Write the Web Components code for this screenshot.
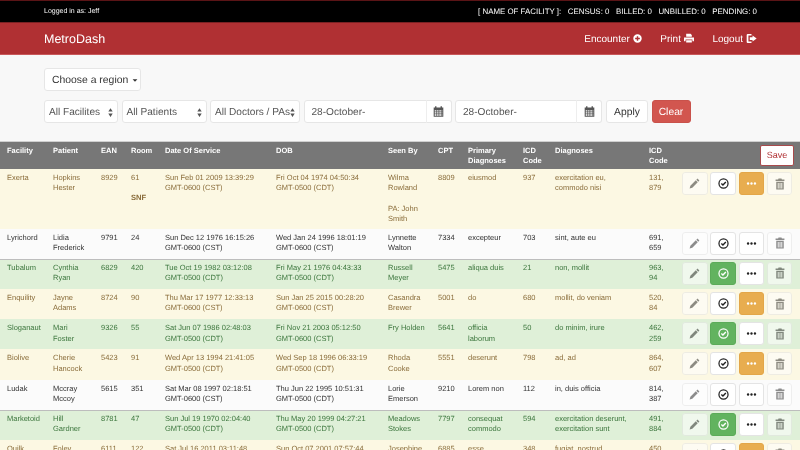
<!DOCTYPE html>
<html>
<head>
<meta charset="utf-8">
<title>MetroDash</title>
<style>
  html, body { margin: 0; height: 450px; overflow: hidden; background: #f8f8f8; }
  body { font-family: "Liberation Sans", Arial, sans-serif; color: #333; text-rendering: geometricPrecision; }
  .tag { display: block; margin-top: 9.700px; font-size: 7.600px; }
</style>
</head>
<body>

<app-header></app-header>
<filter-bar></filter-bar>

<claims-table>
  <claim-row status="warning">
    <span>Exerta</span><span>Hopkins<br>Hester</span><span>8929</span><span>61<b class="tag">SNF</b></span>
    <span>Sun Feb 01 2009 13:39:29<br>GMT-0600 (CST)</span><span>Fri Oct 04 1974 04:50:34<br>GMT-0500 (CDT)</span>
    <span>Wilma<br>Rowland<br><br>PA: John<br>Smith</span><span>8809</span><span>eiusmod</span><span>937</span>
    <span>exercitation eu,<br>commodo nisi</span><span>131,<br>879</span>
  </claim-row>
  <claim-row>
    <span>Lyrichord</span><span>Lidia<br>Frederick</span><span>9791</span><span>24</span>
    <span>Sun Dec 12 1976 16:15:26<br>GMT-0600 (CST)</span><span>Wed Jan 24 1996 18:01:19<br>GMT-0600 (CST)</span>
    <span>Lynnette<br>Walton</span><span>7334</span><span>excepteur</span><span>703</span>
    <span>sint, aute eu</span><span>691,<br>659</span>
  </claim-row>
  <claim-row status="success" ruled>
    <span>Tubalum</span><span>Cynthia<br>Ryan</span><span>6829</span><span>420</span>
    <span>Tue Oct 19 1982 03:12:08<br>GMT-0500 (CDT)</span><span>Fri May 21 1976 04:43:33<br>GMT-0500 (CDT)</span>
    <span>Russell<br>Meyer</span><span>5475</span><span>aliqua duis</span><span>21</span>
    <span>non, mollit</span><span>963,<br>94</span>
  </claim-row>
  <claim-row status="warning">
    <span>Enquility</span><span>Jayne<br>Adams</span><span>8724</span><span>90</span>
    <span>Thu Mar 17 1977 12:33:13<br>GMT-0600 (CST)</span><span>Sun Jan 25 2015 00:28:20<br>GMT-0600 (CST)</span>
    <span>Casandra<br>Brewer</span><span>5001</span><span>do</span><span>680</span>
    <span>mollit, do veniam</span><span>520,<br>84</span>
  </claim-row>
  <claim-row status="success">
    <span>Sloganaut</span><span>Mari<br>Foster</span><span>9326</span><span>55</span>
    <span>Sat Jun 07 1986 02:48:03<br>GMT-0500 (CDT)</span><span>Fri Nov 21 2003 05:12:50<br>GMT-0600 (CST)</span>
    <span>Fry Holden</span><span>5641</span><span>officia<br>laborum</span><span>50</span>
    <span>do minim, irure</span><span>462,<br>259</span>
  </claim-row>
  <claim-row status="warning">
    <span>Biolive</span><span>Cherie<br>Hancock</span><span>5423</span><span>91</span>
    <span>Wed Apr 13 1994 21:41:05<br>GMT-0500 (CDT)</span><span>Wed Sep 18 1996 06:33:19<br>GMT-0500 (CDT)</span>
    <span>Rhoda<br>Cooke</span><span>5551</span><span>deserunt</span><span>798</span>
    <span>ad, ad</span><span>864,<br>607</span>
  </claim-row>
  <claim-row>
    <span>Ludak</span><span>Mccray<br>Mccoy</span><span>5615</span><span>351</span>
    <span>Sat Mar 08 1997 02:18:51<br>GMT-0600 (CST)</span><span>Thu Jun 22 1995 10:51:31<br>GMT-0500 (CDT)</span>
    <span>Lorie<br>Emerson</span><span>9210</span><span>Lorem non</span><span>112</span>
    <span>in, duis officia</span><span>814,<br>387</span>
  </claim-row>
  <claim-row status="success" ruled>
    <span>Marketoid</span><span>Hill<br>Gardner</span><span>8781</span><span>47</span>
    <span>Sun Jul 19 1970 02:04:40<br>GMT-0500 (CDT)</span><span>Thu May 20 1999 04:27:21<br>GMT-0500 (CDT)</span>
    <span>Meadows<br>Stokes</span><span>7797</span><span>consequat<br>commodo</span><span>594</span>
    <span>exercitation deserunt,<br>exercitation sunt</span><span>491,<br>884</span>
  </claim-row>
  <claim-row status="warning">
    <span>Quilk</span><span>Foley<br>Nash</span><span>6111</span><span>122</span>
    <span>Sat Jul 16 2011 03:11:48<br>GMT-0500 (CDT)</span><span>Sun Oct 07 2001 07:57:44<br>GMT-0500 (CDT)</span>
    <span>Josephine<br>Bass</span><span>6885</span><span>esse</span><span>348</span>
    <span>fugiat, nostrud</span><span>450,<br>112</span>
  </claim-row>
</claims-table>

<script>
  var ICONS = {
    pencil: '<svg viewBox="0 0 16 16" width="11" height="11"><path fill="currentColor" d="M12.300 .9l2.800 2.800-1.600 1.600-2.800-2.800zM9.900 3.300l2.800 2.800-7.900 7.900-3.900 1.100 1.100-3.900z"/></svg>',
    check: '<svg viewBox="0 0 16 16" width="11" height="11"><circle cx="8" cy="8" r="6.600" fill="none" stroke="currentColor" stroke-width="1.800"/><path fill="none" stroke="currentColor" stroke-width="2" d="M4.900 8l2.300 2.300 4.200-4.600"/></svg>',
    dots: '<svg viewBox="0 0 16 16" width="11" height="11"><g fill="currentColor"><circle cx="3" cy="8" r="1.700"/><circle cx="8" cy="8" r="1.700"/><circle cx="13" cy="8" r="1.700"/></g></svg>',
    trash: '<svg viewBox="0 0 16 16" width="12" height="12"><path fill="currentColor" d="M6 .6h4l.5 1.400h3.400v2H2.100V2h3.400zM3 5h10v10.400H3zm2 1.500v7.400h1.200V6.500zm2.400 0v7.400h1.200V6.500zm2.400 0v7.400H11V6.500z"/></svg>',
    plus: '<svg viewBox="0 0 16 16" width="9" height="9"><path fill="currentColor" fill-rule="evenodd" d="M8 .5a7.500 7.500 0 1 0 0 15 7.500 7.500 0 0 0 0-15zM6.700 3.800h2.600v2.900h2.900v2.600H9.300v2.900H6.700V9.300H3.800V6.700h2.900z"/></svg>',
    print: '<svg viewBox="0 0 16 16" width="10" height="10"><path fill="currentColor" fill-rule="evenodd" d="M3.500 1h7l2 2v3h-9zM0 7h16v6h-2.500v-2.500h-11V13H0zM3.500 11.500h9V15h-9z"/></svg>',
    logout: '<svg viewBox="0 0 16 16" width="11" height="11"><path fill="currentColor" d="M2.500 1.500H8v2H3.500v9H8v2H2.500A1.500 1.500 0 0 1 1 13V3a1.500 1.500 0 0 1 1.500-1.500z"/><path fill="currentColor" d="M9.500 3.500L15.500 8l-6 4.500V10H5.500V6h4z"/></svg>',
    calendar: '<svg viewBox="0 0 16 16" width="11" height="11"><path fill="currentColor" fill-rule="evenodd" d="M3 .5h2V2h6V.5h2V2h2v13.500H1V2h2zM2.500 6v2h2.400V6zm3.500 0v2h2V6zm3.200 0v2h2.300V6zm3.300 0v2h1V6zM2.500 9v2h2.400V9zM6 9v2h2V9zm3.200 0v2h2.300V9zm3.300 0v2h1V9zM2.500 12v2h2.400v-2zM6 12v2h2v-2zm3.200 0v2h2.300v-2zm3.300 0v2h1v-2z"/></svg>'
  };

  class AppHeader extends HTMLElement {
    constructor() {
      super();
      this.attachShadow({ mode: 'open' });
    }
    connectedCallback() {
      this.shadowRoot.innerHTML = `
        <style>
          :host { display: block; color: #fff; will-change: transform; }
          .top { background: #000; border-top: 1px solid #5a1416; height: 22px; box-sizing: border-box; padding: 0 43px 0 44px;
                 display: flex; align-items: center; justify-content: space-between; font-size: 7px; }
          .top b { font-weight: normal; }
          .stats { display: flex; gap: 6.500px; font-size: 7.900px; }
          nav { background: #b03033; height: 33px; box-sizing: border-box; border-top: 1px solid #7a2123; border-bottom: 1px solid #c9585a;
                padding: 1px 43px 0 44px; display: flex; align-items: center; justify-content: space-between; }
          .brand { font-size: 12.500px; }
          .links { display: flex; gap: 18.500px; font-size: 10px; }
          .links span { display: flex; align-items: center; gap: 3px; }
          svg { display: block; margin-top: -2px; }
        </style>
        <div class="top">
          <b>Logged in as: Jeff</b>
          <div class="stats">
            <span>[ NAME OF FACILITY ]:</span><span>CENSUS: 0</span><span>BILLED: 0</span><span>UNBILLED: 0</span><span>PENDING: 0</span>
          </div>
        </div>
        <nav>
          <div class="brand">MetroDash</div>
          <div class="links">
            <span>Encounter ${ICONS.plus}</span>
            <span>Print ${ICONS.print}</span>
            <span>Logout ${ICONS.logout}</span>
          </div>
        </nav>`;
    }
  }
  customElements.define('app-header', AppHeader);

  class FilterBar extends HTMLElement {
    constructor() {
      super();
      this.attachShadow({ mode: 'open' });
    }
    connectedCallback() {
      var arrows = '<svg viewBox="0 0 8 14" width="5" height="9"><path fill="#555" d="M4 0l3.500 5.500h-7zM4 14L.5 8.500h7z"/></svg>';
      this.shadowRoot.innerHTML = `
        <style>
          :host { display: block; padding: 13px 0 18px 44px; font-size: 10.100px; color: #555; white-space: nowrap; will-change: transform; }
          .box { box-sizing: border-box; height: 23px; padding-top: 1px; background: #fff; border: 1px solid #e6e6e6; border-radius: 3px;
                 display: flex; align-items: center; }
          .region { width: 97px; padding-left: 7px; color: #333; font-size: 10.400px; gap: 4px; }
          .caret { border-top: 3px solid #333; border-left: 3px solid transparent; border-right: 3px solid transparent; margin-top: 1px; transform: scale(.8); }
          .row { display: flex; margin-top: 9px; gap: 3.500px; }
          .select { padding: 1px 4px 0; justify-content: space-between; }
          .date { display: flex; }
          .date .input { width: 123px; padding-left: 7px; border-radius: 3px 0 0 3px; }
          .date .addon { width: 26px; padding-top: 0; justify-content: center; border-left: 1px solid #eee; border-radius: 0 3px 3px 0; color: #555; margin-left: -1px; }
          .btn { justify-content: center; font-size: 10.300px; }
          .apply { width: 42px; color: #333; margin-left: .5px; }
          .clear { width: 39px; background: #d2564f; border-color: #c9524b; color: #fff; }
          svg { display: block; }
        </style>
        <div class="box region">Choose a region <i class="caret"></i></div>
        <div class="row">
          <div class="box select" style="width:74px">All Facilites ${arrows}</div>
          <div class="box select" style="width:85px">All Patients ${arrows}</div>
          <div class="box select" style="width:90px">All Doctors / PAs ${arrows}</div>
          <div class="date"><div class="box input">28-October-</div><div class="box addon">${ICONS.calendar}</div></div>
          <div class="date"><div class="box input" style="width:122px">28-October-</div><div class="box addon">${ICONS.calendar}</div></div>
          <div class="box btn apply">Apply</div>
          <div class="box btn clear">Clear</div>
        </div>`;
    }
  }
  customElements.define('filter-bar', FilterBar);

  class ClaimsTable extends HTMLElement {
    constructor() {
      super();
      this.attachShadow({ mode: 'open' });
    }
    connectedCallback() {
      this.shadowRoot.innerHTML = `
        <style>
          :host { display: block; font-size: 7.500px; line-height: 10.300px; will-change: transform;
                  --cols: 46px 48px 30px 34px 111px 112px 50px 30px 55px 32px 94px 33px 1fr; }
          .head { background: #777; border-top: 1px solid #cfcfcf; color: #fff; font-weight: bold; height: 27px;
                  padding-left: 7px; display: grid; grid-template-columns: var(--cols); align-items: start; }
          .head span { margin-top: 3.500px; }
          .save { justify-self: end; margin: 3px 6px 0 0; box-sizing: border-box; width: 34px; height: 21px; display: flex;
                  align-items: center; justify-content: center; background: #fff; border: 1px solid #a94a4c; border-radius: 2px;
                  color: #b03033; font-weight: normal; font-size: 9px; }
        </style>
        <div class="head">
          <span>Facility</span><span>Patient</span><span>EAN</span><span>Room</span><span>Date Of Service</span><span>DOB</span>
          <span>Seen By</span><span>CPT</span><span>Primary<br>Diagnoses</span><span>ICD<br>Code</span><span>Diagnoses</span><span>ICD<br>Code</span>
          <div class="save">Save</div>
        </div>
        <slot></slot>`;
    }
  }
  customElements.define('claims-table', ClaimsTable);

  class ClaimRow extends HTMLElement {
    constructor() {
      super();
      this.attachShadow({ mode: 'open' });
    }
    connectedCallback() {
      var status = this.getAttribute('status') || 'plain';
      this.shadowRoot.innerHTML = `
        <style>
          :host { display: grid; grid-template-columns: var(--cols); padding: 3px 0 4.200px 7px; background: #fbfbfb; color: #333; }
          :host([status="warning"]) { background: #fcf8e3; color: #8a6d3b; }
          :host([status="success"]) { background: #dff0d8; color: #3c763d; }
          :host([ruled]) { box-shadow: inset 0 1px 0 #bdbdbd; }
          ::slotted(span) { margin-top: 1px; }
          .actions { display: flex; gap: 2.800px; }
        </style>
        <slot></slot>
        <div class="actions">
          <action-btn icon="pencil" faded></action-btn>
          <action-btn icon="check" ${status === 'success' ? 'tone="success"' : ''}></action-btn>
          <action-btn icon="dots" ${status === 'warning' ? 'tone="warning"' : ''}></action-btn>
          <action-btn icon="trash" faded></action-btn>
        </div>`;
    }
  }
  customElements.define('claim-row', ClaimRow);

  class ActionBtn extends HTMLElement {
    constructor() {
      super();
      this.attachShadow({ mode: 'open' });
    }
    connectedCallback() {
      this.shadowRoot.innerHTML = `
        <style>
          :host { display: flex; box-sizing: border-box; width: 25.500px; height: 23px; align-items: center; justify-content: center;
                  background: #fff; border: 1px solid #e4e4e4; border-radius: 3px; color: #222; }
          :host([faded]) { opacity: .55; color: #333; }
          :host([tone="success"]) { background: #62b35f; border-color: #5cab59; color: #fff; }
          :host([tone="warning"]) { background: #e8ad4f; border-color: #e3a648; color: #fff; }
          svg { display: block; }
        </style>
        ${ICONS[this.getAttribute('icon')]}`;
    }
  }
  customElements.define('action-btn', ActionBtn);
</script>
</body>
</html>
